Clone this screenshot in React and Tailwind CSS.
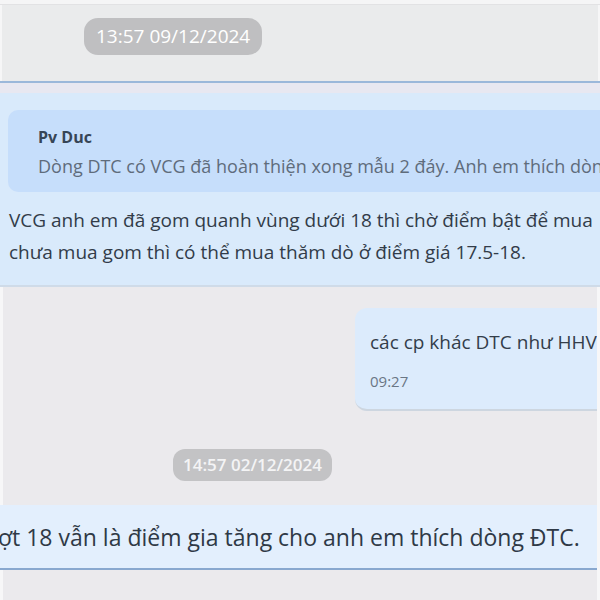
export default function App() {
  const font = { fontFamily: '"Open Sans", "Noto Sans", sans-serif' };
  return (
    <div className="w-[600px] h-[600px] overflow-hidden bg-[#ebeaed] flex flex-col" style={font}>
      <div className="h-[5px] bg-[#f5f5f6] border-b border-[#e2e2e4] shrink-0" />
      <div className="h-[76px] shrink-0 bg-[#eaebec] border-x-2 border-l-[#f6f6f7] border-r-[#f6f6f7] pl-[82px] pt-[13px]">
        <div className="inline-flex items-center h-[37px] px-[12px] rounded-[14px] bg-[#bfbfc1] text-white text-[19px]">
          13:57 09/12/2024
        </div>
      </div>
      <div className="h-[2px] bg-[#9bb8da] shrink-0" />
      <div className="h-[10px] bg-[#e8e8f1] shrink-0" />
      <div className="h-[194px] shrink-0 bg-[#d9eafb] border-b-2 border-[#cfdbe8] pt-[17px] pl-[8px] flex flex-col">
        <div className="h-[82px] rounded-l-[10px] bg-[#c6defb] flex items-center pl-[17px]">
          <div className="w-[3px] h-[57px] bg-[#3d6bd1] rounded-full" />
          <div className="pl-[13px] flex flex-col whitespace-nowrap pt-[2px]">
            <div className="text-[16px] font-bold text-[#364556] leading-[20px]">Pv Duc</div>
            <div className="text-[18px] text-[#5f6c7b] leading-[24px] mt-[7px]">
              Dòng DTC có VCG đã hoàn thiện xong mẫu 2 đáy. Anh em thích dòng DTC
            </div>
          </div>
        </div>
        <div className="mt-[12px] pl-[1px] text-[19px] leading-[32px] text-[#323c49] whitespace-nowrap">
          <div>VCG anh em đã gom quanh vùng dưới 18 thì chờ điểm bật để mua</div>
          <div>chưa mua gom thì có thể mua thăm dò ở điểm giá 17.5-18.</div>
        </div>
      </div>
      <div className="flex-1 bg-[#ebeaed] border-x-[3px] border-l-[#f7f7f8] border-r-[#f7f7f8] flex flex-col">
        <div className="flex justify-end pt-[21px]">
          <div className="w-[242px] h-[103px] rounded-l-[12px] bg-[#dcebfc] border-b-2 border-[#cdd6e0] pl-[15px] pt-[22px] whitespace-nowrap overflow-hidden">
            <div className="text-[19px] leading-[24px] text-[#333d4a]">các cp khác DTC như HHV, HHS</div>
            <div className="text-[15px] leading-[20px] text-[#6a7685] mt-[17px]">09:27</div>
          </div>
        </div>
        <div className="pl-[170px] pt-[38px]">
          <div className="inline-flex items-center h-[32px] px-[10px] rounded-[12px] bg-[#c3c3c5] text-[#f4f4f5] text-[17px] font-semibold">
            14:57 02/12/2024
          </div>
        </div>
        <div className="mt-[24px] ml-[-3px] h-[65px] bg-[#e3effd] border-b-2 border-[#89a8cf] flex items-center whitespace-nowrap">
          <div className="text-[23px] text-[#2f3946] ml-[-2px] pt-[2px]">ợt 18 vẫn là điểm gia tăng cho anh em thích dòng ĐTC.</div>
        </div>
      </div>
    </div>
  );
}
